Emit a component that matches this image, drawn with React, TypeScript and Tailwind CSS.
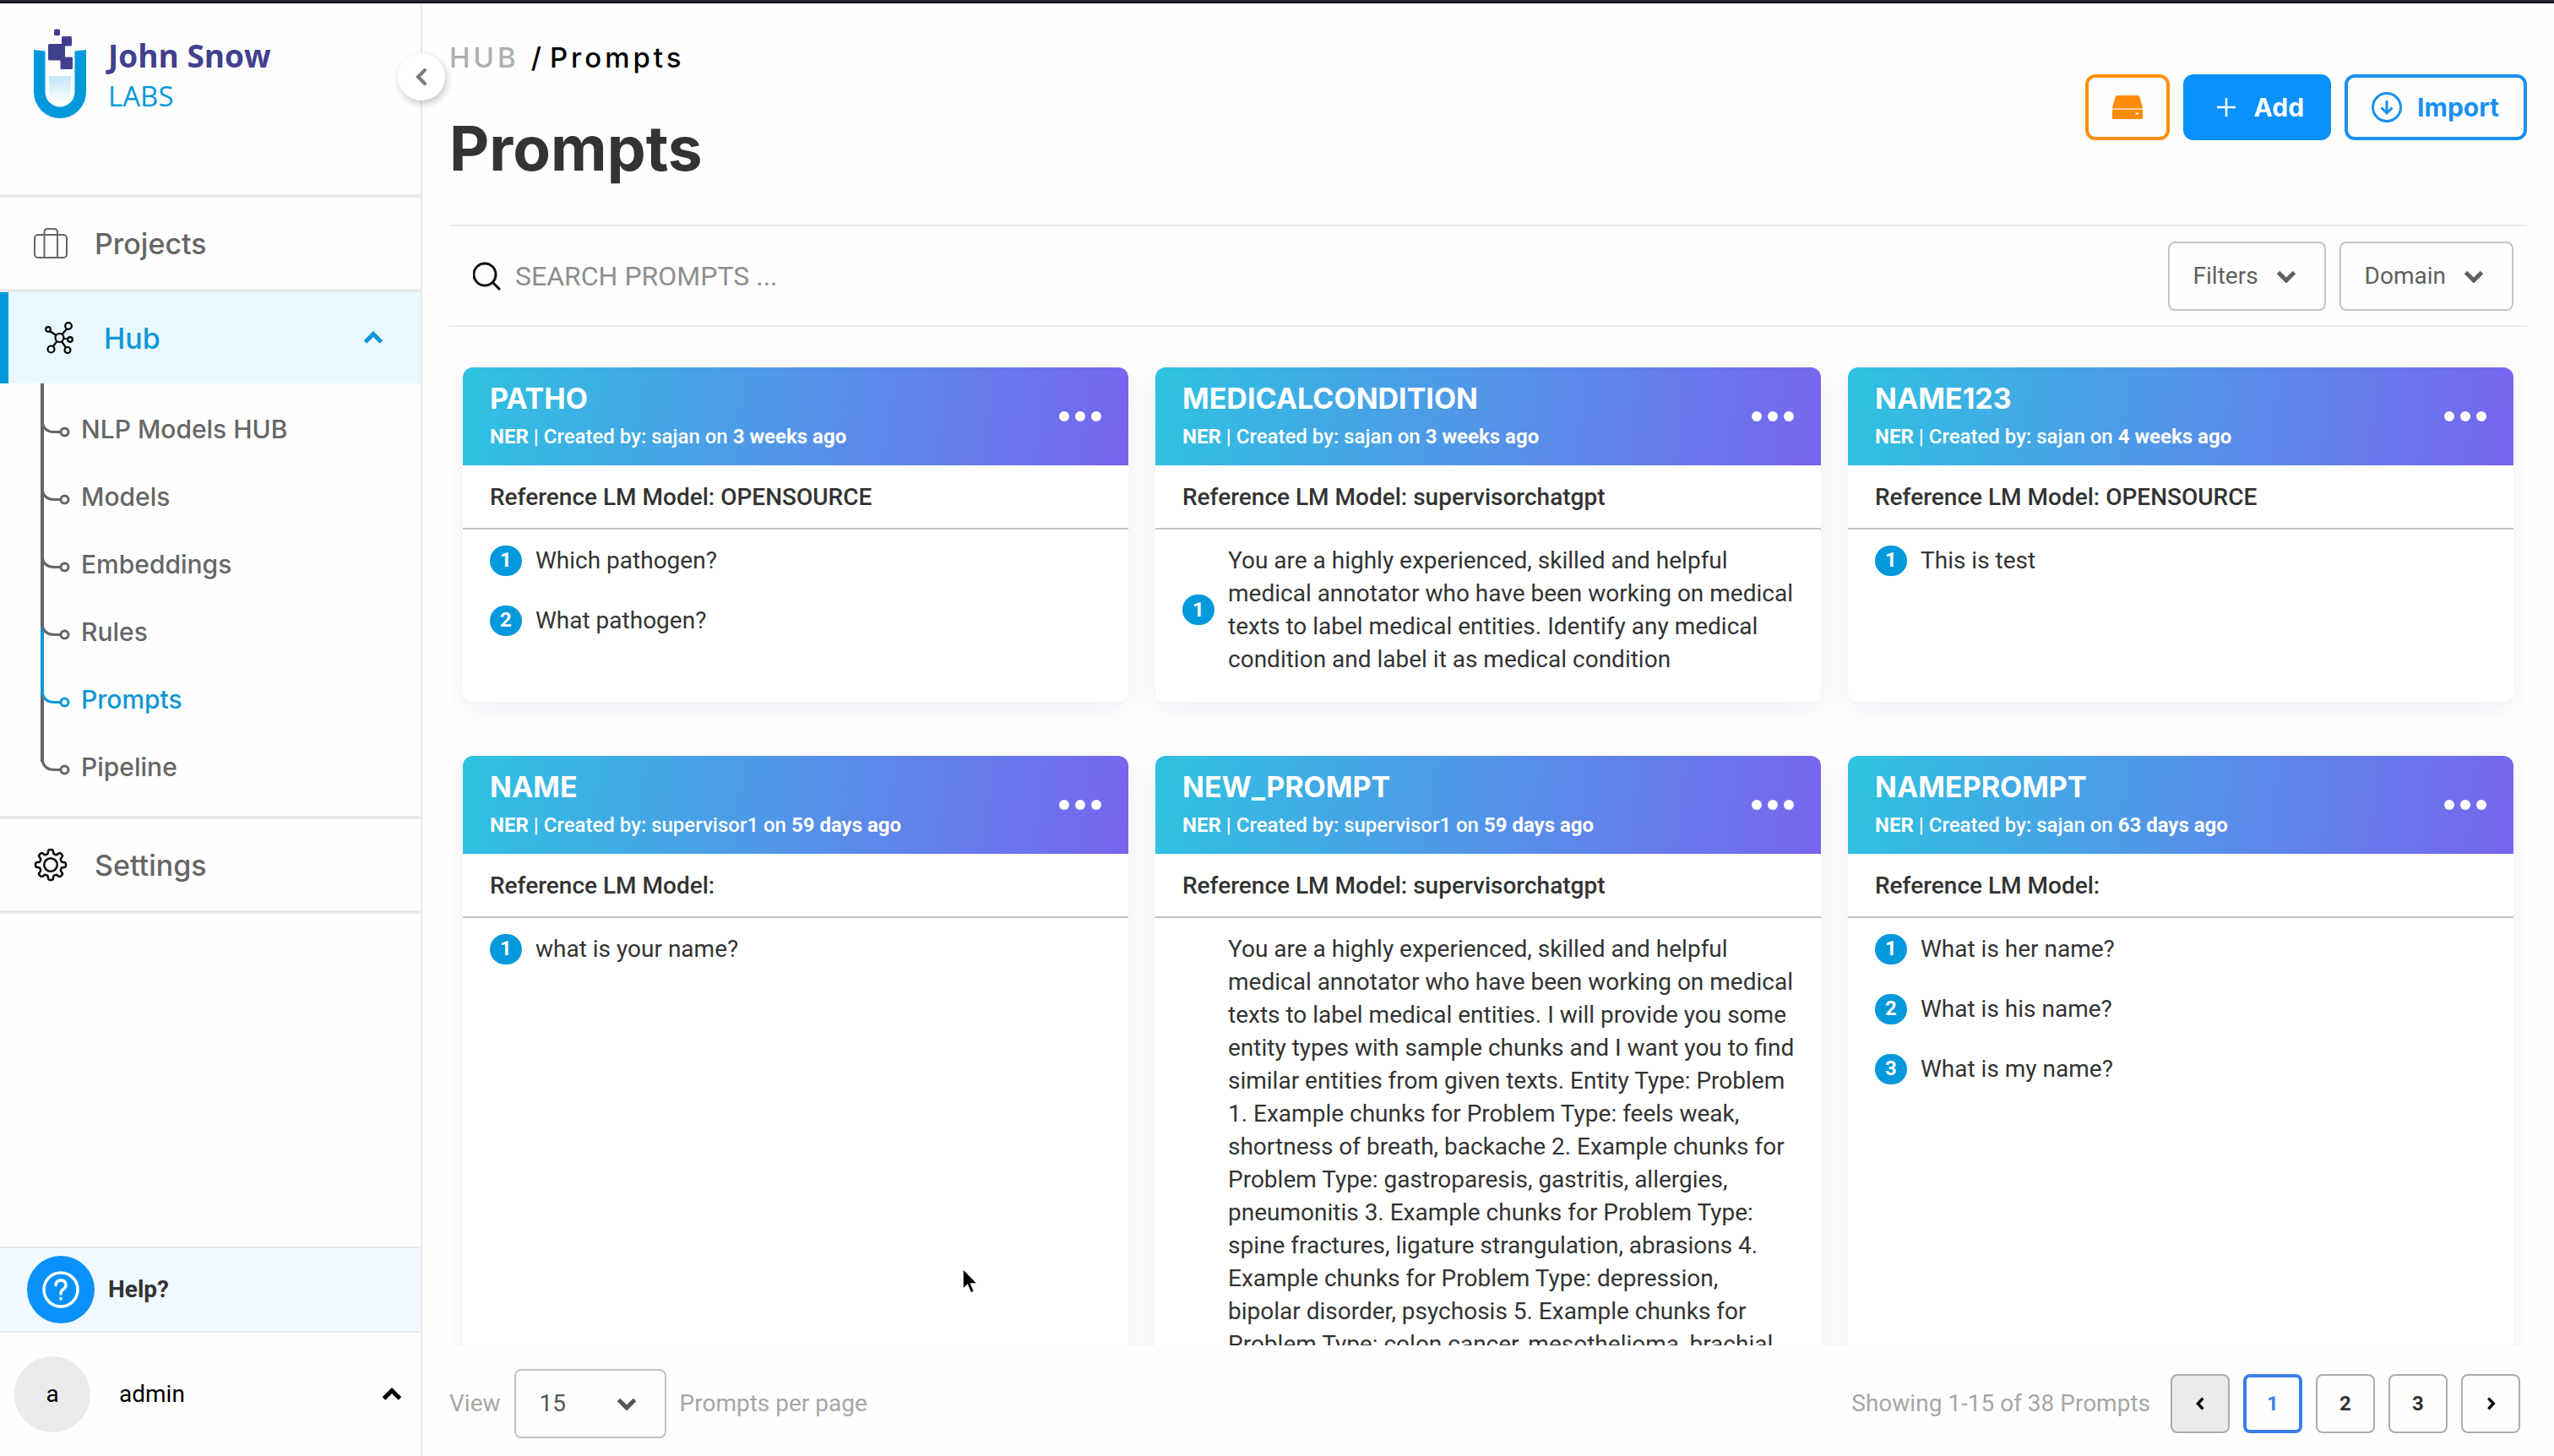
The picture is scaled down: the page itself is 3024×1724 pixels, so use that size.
import React from "react";

const INTER = "font-['Inter',sans-serif]";

type Prompt = {
  name: string;
  author: string;
  age: string;
  model: string;
  items: string[];
};

const prompts: Prompt[] = [
  {
    name: "PATHO",
    author: "sajan",
    age: "3 weeks ago",
    model: "OPENSOURCE",
    items: ["Which pathogen?", "What pathogen?"],
  },
  {
    name: "MEDICALCONDITION",
    author: "sajan",
    age: "3 weeks ago",
    model: "supervisorchatgpt",
    items: [
      "You are a highly experienced, skilled and helpful medical annotator who have been working on medical texts to label medical entities. Identify any medical condition and label it as medical condition",
    ],
  },
  {
    name: "NAME123",
    author: "sajan",
    age: "4 weeks ago",
    model: "OPENSOURCE",
    items: ["This is test"],
  },
  {
    name: "NAME",
    author: "supervisor1",
    age: "59 days ago",
    model: "",
    items: ["what is your name?"],
  },
  {
    name: "NEW_PROMPT",
    author: "supervisor1",
    age: "59 days ago",
    model: "supervisorchatgpt",
    items: [
      "You are a highly experienced, skilled and helpful medical annotator who have been working on medical texts to label medical entities. I will provide you some entity types with sample chunks and I want you to find similar entities from given texts. Entity Type: Problem 1. Example chunks for Problem Type: feels weak, shortness of breath, backache 2. Example chunks for Problem Type: gastroparesis, gastritis, allergies, pneumonitis 3. Example chunks for Problem Type: spine fractures, ligature strangulation, abrasions 4. Example chunks for Problem Type: depression, bipolar disorder, psychosis 5. Example chunks for Problem Type: colon cancer, mesothelioma, brachial plexus injury 6. Example chunks for Problem Type: hypertension, diabetes mellitus, anemia Entity Type: Treatment 1. Example chunks for Treatment Type: surgery, chemotherapy, radiation therapy 2. Example chunks for Treatment Type: aspirin, insulin, antibiotics 3. Example chunks for Treatment Type: physical therapy, dialysis, transfusion Entity Type: Test 1. Example chunks for Test Type: blood pressure, chest x-ray, biopsy 2. Example chunks for Test Type: ultrasound, colonoscopy, echocardiogram 3. Example chunks for Test Type: hemoglobin, platelet count, glucose level 4. Example chunks for Test Type: urine culture, lumbar puncture, stress test 5. Example chunks for Test Type: sodium, potassium, creatinine 6. Example chunks for Test Type: heart rate, oxygen saturation, temperature 7. Example chunks for Test Type: mammogram, bone scan, spirometry",
    ],
  },
  {
    name: "NAMEPROMPT",
    author: "sajan",
    age: "63 days ago",
    model: "",
    items: ["What is her name?", "What is his name?", "What is my name?"],
  },
];

const hubLinks = ["NLP Models HUB", "Models", "Embeddings", "Rules", "Prompts", "Pipeline"];

function Chevron({ dir, className }: { dir: "up" | "down" | "left" | "right"; className: string }) {
  const d = {
    up: "M2.5 13 L12 3.5 L21.5 13",
    down: "M2.5 3.5 L12 13 L21.5 3.5",
    left: "M13 2.5 L4 12 L13 21.5",
    right: "M4 2.5 L13 12 L4 21.5",
  }[dir];
  const box = dir === "up" || dir === "down" ? "0 0 24 16" : "0 0 16 24";
  return (
    <svg viewBox={box} className={className} fill="none" stroke="currentColor" strokeWidth="5" aria-hidden="true">
      <path d={d} />
    </svg>
  );
}

function LogoMark() {
  return (
    <svg viewBox="0 0 64 108" className="h-[108px] w-16 shrink-0" aria-hidden="true">
      <defs>
        <linearGradient id="liquid" x1="0" y1="0" x2="0" y2="1">
          <stop offset="0" stopColor="#c4e6fb" />
          <stop offset="1" stopColor="#ffffff" />
        </linearGradient>
      </defs>
      <path
        d="M0 26 L13.500 27.500 V76 A17.500 17.500 0 0 0 48.500 76 V27.500 L62 26 V76 A31 31 0 0 1 0 76 Z"
        fill="#0298dc"
      />
      <path d="M18 57 H44 V79 Q42 89 31 89 Q20 89 18 79 Z" fill="url(#liquid)" />
      <g fill="#41408f">
        <rect x="24" y="1.500" width="7" height="7.500" rx="1.500" />
        <rect x="33" y="10" width="12" height="11.500" rx="1.500" />
        <rect x="17" y="19" width="20" height="19.500" rx="1.500" />
        <rect x="31.500" y="34.500" width="14.500" height="14.500" rx="1.500" />
      </g>
    </svg>
  );
}

function SuitcaseIcon() {
  return (
    <svg viewBox="0 0 40 36" className="h-9 w-10" fill="none" stroke="#666" strokeWidth="2" aria-hidden="true">
      <rect x="1" y="8" width="38" height="27" rx="4" />
      <path d="M12.500 35 V5 Q12.500 1 16.500 1 H24 Q28 1 28 5 V35" />
    </svg>
  );
}

function HubIcon() {
  return (
    <svg viewBox="0 0 34 38" className="h-[38px] w-[34px]" fill="none" stroke="#000" strokeWidth="2.200" aria-hidden="true">
      <circle cx="17.500" cy="19" r="5" />
      <circle cx="4" cy="9" r="2.800" />
      <circle cx="28" cy="5" r="3.800" />
      <circle cx="30" cy="21" r="2.800" />
      <circle cx="7.500" cy="32.500" r="4" />
      <circle cx="27" cy="33.500" r="3.500" />
      <path d="M6 11 L13.500 16 M26 8.500 L20.500 15 M22.500 20 H27 M14.500 23 L10 29 M20 23.500 L25 30.500" />
    </svg>
  );
}

const gearPath = (() => {
  const pts: string[] = [];
  for (let i = 0; i < 240; i++) {
    const a = (i / 240) * Math.PI * 2;
    const wave = Math.tanh(2.4 * Math.cos(8 * a));
    const r = 15.6 + 2.4 * wave;
    pts.push(`${(20 + r * Math.cos(a)).toFixed(2)} ${(20 + r * Math.sin(a)).toFixed(2)}`);
  }
  return `M${pts.join(" L")} Z`;
})();

function GearIcon() {
  return (
    <svg viewBox="0 0 40 40" className="size-10" fill="none" stroke="#111" strokeWidth="2.600" strokeLinejoin="round" aria-hidden="true">
      <path d={gearPath} />
      <circle cx="20" cy="20" r="7.800" />
    </svg>
  );
}

function Branch({ first, last, active, nextActive }: { first: boolean; last: boolean; active: boolean; nextActive: boolean }) {
  const grey = "#666666";
  const line = active ? "#0f97d6" : grey;
  const top = first ? -14 : 0;
  return (
    <svg viewBox="0 0 34 80" className="h-20 w-[34px] shrink-0 overflow-visible" fill="none" aria-hidden="true">
      {!last && <path d="M2 34 V80" stroke={nextActive ? "#0f97d6" : grey} strokeWidth="4" />}
      <path d={`M2 ${top} V34`} stroke={line} strokeWidth="4" />
      <path d="M2 32 Q4 43.500 16 43.500 H24" stroke={line} strokeWidth="3" />
      <circle cx="28.500" cy="43.500" r="4.500" stroke={line} strokeWidth="3" />
    </svg>
  );
}

function Sidebar() {
  return (
    <aside className="relative flex w-[500px] shrink-0 flex-col border-r-2 border-[#e9e9e9]">
      <div className="flex h-[230px] items-start gap-6 border-b-4 border-[#e9e9e9] pt-[29px] pl-10">
        <LogoMark />
        <div className="flex flex-col pt-2 font-['Open_Sans',sans-serif]">
          <span className="text-[37px] leading-[49px] font-bold text-[#41408f]">John Snow</span>
          <span className="text-[33px] leading-[48px] text-[#0298dc]">LABS</span>
        </div>
      </div>
      <button
        type="button"
        aria-label="Collapse sidebar"
        className="absolute top-[59px] -right-[29px] z-10 flex size-14 items-center justify-center rounded-full bg-white text-[#7a7a7a] shadow-[2px_4px_10px_rgba(0,0,0,0.22)]"
      >
        <svg viewBox="0 0 14 22" className="h-[22px] w-[14px]" fill="none" stroke="currentColor" strokeWidth="4" strokeLinecap="round" aria-hidden="true">
          <path d="M11 3 L3 11 L11 19" />
        </svg>
      </button>
      <nav className={`${INTER} text-[34px] font-medium text-[#666]`}>
        <a href="#projects" className="flex h-28 items-center gap-8 border-b-4 border-[#e9e9e9] pl-10">
          <SuitcaseIcon />
          Projects
        </a>
        <div className="border-b-4 border-[#e9e9e9]">
          <a href="#hub" className="flex h-[108px] items-center border-l-[10px] border-[#0298dc] bg-[#e9f7fe] pr-11 pl-[43px] text-[#0f97d6]">
            <HubIcon />
            <span className="ml-9 grow">Hub</span>
            <Chevron dir="up" className="h-4 w-6" />
          </a>
          <ul className="pt-[14px] pb-[18px] text-[30px]">
            {hubLinks.map((label, i) => (
              <li key={label}>
                <a
                  href={`#${label.toLowerCase().replace(/ /g, "-")}`}
                  className={`flex h-20 items-center gap-[14px] pl-12 ${label === "Prompts" ? "text-[#0f97d6]" : ""}`}
                >
                  <Branch
                    first={i === 0}
                    last={i === hubLinks.length - 1}
                    active={label === "Prompts"}
                    nextActive={hubLinks[i + 1] === "Prompts"}
                  />
                  {label}
                </a>
              </li>
            ))}
          </ul>
        </div>
        <a href="#settings" className="flex h-28 items-center gap-8 border-b-4 border-[#e9e9e9] pl-10">
          <GearIcon />
          Settings
        </a>
      </nav>
      <div className="mt-auto">
        <a href="#help" className="flex h-[102px] items-center gap-4 border-y-2 border-[#e9e9e9] bg-[#f0f9ff] pl-8 text-[28px] font-bold text-[#333]">
          <span className="flex size-20 items-center justify-center rounded-full bg-[#0891fa]">
            <svg viewBox="0 0 44 44" className="size-11" fill="none" stroke="#fff" strokeWidth="3.500" strokeLinecap="round" aria-hidden="true">
              <circle cx="22" cy="22" r="20" />
              <path d="M16 16.500 Q16.500 11 22 11 Q28 11 28 16.500 Q28 19.500 25 21.500 Q22 23.500 22 27" />
              <path d="M22 32.500 V33" />
            </svg>
          </span>
          Help?
        </a>
        <button type="button" className="flex h-[146px] w-full items-center pr-[22px] pl-[17px] text-left text-[28px] text-black">
          <span className="flex size-[90px] items-center justify-center rounded-full bg-[#ebebeb]">a</span>
          <span className="ml-[34px] grow">admin</span>
          <Chevron dir="up" className="h-4 w-6" />
        </button>
      </div>
    </aside>
  );
}

function PageHeader() {
  return (
    <header className={`${INTER} flex items-start justify-between border-b-2 border-[#ebebeb] pb-[50px]`}>
      <div>
        <nav aria-label="Breadcrumb" className="flex pt-11 text-[33px] leading-10 font-medium tracking-[4px] text-black">
          <a href="#hub" className="text-[#adadad]">HUB</a>
          <span className="mr-[6px] ml-[14px]">/</span>
          <span>Prompts</span>
        </nav>
        <h1 className="mt-12 text-[73px] leading-20 font-bold text-[#333]">Prompts</h1>
      </div>
      <div className="mt-[84px] flex h-[78px] gap-4 text-[30px] font-bold">
        <button type="button" aria-label="Storage" className="flex w-[100px] items-center justify-center rounded-xl border-4 border-[#fd8f0c]">
          <svg viewBox="0 0 36 28" className="h-7 w-9" aria-hidden="true">
            <path d="M5 0 H31 L32.500 2 L36 15 H0 L3.500 2 Z M0 17 H36 V26.500 Q36 28 34.500 28 H1.500 Q0 28 0 26.500 Z" fill="#ff8c08" />
            <path d="M0 15 H36 V17 H0 Z" fill="#ffd09a" />
            <path d="M27.500 21.500 H31" stroke="#fff" strokeWidth="2" />
          </svg>
        </button>
        <button type="button" className="flex items-center gap-[22px] rounded-xl bg-[#0891fa] pr-8 pl-10 text-white">
          <svg viewBox="0 0 22 22" className="size-[22px]" stroke="#fff" strokeWidth="2.500" aria-hidden="true">
            <path d="M11 0 V22 M0 11 H22" />
          </svg>
          Add
        </button>
        <button type="button" className="flex items-center gap-[18px] rounded-xl border-4 border-[#1a90f0] pr-[29px] pl-7 text-[#1a90f0]">
          <svg viewBox="0 0 36 36" className="size-9" fill="none" stroke="currentColor" strokeWidth="3" aria-hidden="true">
            <circle cx="18" cy="18" r="16.500" />
            <path d="M18 10 V25 M11.500 18.500 L18 25 L24.500 18.500" />
          </svg>
          Import
        </button>
      </div>
    </header>
  );
}

function DropButton({ label }: { label: string }) {
  return (
    <button type="button" className="flex h-[82px] items-center gap-[21px] rounded-lg border-2 border-[#c4c4c4] pr-[33px] pl-7 text-[28px] text-[#606060]">
      {label}
      <Chevron dir="down" className="h-4 w-6" />
    </button>
  );
}

function PromptCard({ prompt }: { prompt: Prompt }) {
  return (
    <article className="flex flex-col rounded-xl bg-white shadow-[0_8px_32px_rgba(90,90,180,0.10)]">
      <div className="flex h-[116px] items-center justify-between rounded-t-xl bg-linear-[97deg] from-[#2ec2e1] to-[#7865ef] px-8 text-white">
        <div className="pt-2">
          <h2 className={`${INTER} text-[34px] leading-10 font-bold`}>{prompt.name}</h2>
          <p className="text-[24px] leading-[50px] font-medium">
            <b className="font-bold">NER</b> | Created by: {prompt.author} on <b className="font-bold">{prompt.age}</b>
          </p>
        </div>
        <button type="button" aria-label={`Actions for ${prompt.name}`} className="flex gap-[7px]">
          <i className="size-3 rounded-full bg-white" />
          <i className="size-3 rounded-full bg-white" />
          <i className="size-3 rounded-full bg-white" />
        </button>
      </div>
      <p className="flex h-[76px] items-center border-b-2 border-[#c2c2c2] px-8 pt-[2px] text-[28px] font-medium">
        Reference LM Model: {prompt.model}
      </p>
      <ol className="flex flex-col gap-8 pt-[17px] pr-[30px] pb-[31px] pl-8 text-[28px] leading-[39px]">
        {prompt.items.map((item, i) => (
          <li key={item} className="flex items-center gap-4">
            <span className="flex h-9 w-[38px] shrink-0 items-center justify-center rounded-full bg-[#0298dc] text-[24px] font-bold text-white">
              {i + 1}
            </span>
            {item}
          </li>
        ))}
      </ol>
    </article>
  );
}

function Footer() {
  const page = "flex size-[70px] items-center justify-center rounded-lg border-2 border-[#adadad] text-[#333]";
  return (
    <footer className="flex items-center justify-between pt-7 pr-2 pb-[21px] text-[28px] text-[#a6a6a6]">
      <div className="flex items-center gap-4">
        <label htmlFor="page-size">View</label>
        <div className="relative text-[#555]">
          <select id="page-size" defaultValue="15" className="h-[82px] w-[180px] appearance-none rounded-lg border-2 border-[#c2c2c2] pl-7">
            <option>15</option>
            <option>30</option>
            <option>60</option>
          </select>
          <Chevron dir="down" className="pointer-events-none absolute top-[33px] right-[35px] h-4 w-6" />
        </div>
        <span>Prompts per page</span>
      </div>
      <div className="flex items-center gap-4">
        <span className="mr-2">Showing 1-15 of 38 Prompts</span>
        <nav aria-label="Pagination" className="flex gap-4 text-[24px] font-bold">
          <button type="button" aria-label="Previous page" className="flex size-[70px] items-center justify-center rounded-lg border-2 border-[#adadad] bg-[#ebebeb] text-black">
            <Chevron dir="left" className="h-4 w-3" />
          </button>
          <button type="button" className="flex size-[70px] items-center justify-center rounded-lg border-4 border-[#3a7fe8] text-[#3a7fe8]">1</button>
          <button type="button" className={page}>2</button>
          <button type="button" className={page}>3</button>
          <button type="button" aria-label="Next page" className={page}>
            <Chevron dir="right" className="h-4 w-3 text-black" />
          </button>
        </nav>
      </div>
    </footer>
  );
}

export default function App() {
  return (
    <div className="relative flex h-screen flex-col bg-[#fefefe] font-['Roboto',sans-serif] text-[#333]">
      <div className="h-1 shrink-0 border-t-2 border-[#2a2836] bg-[#050509]" />
      <div className="flex min-h-0 grow">
        <Sidebar />
        <main className="flex min-w-0 grow flex-col px-8">
          <PageHeader />
          <div className="flex items-center gap-4 border-b-2 border-[#ebebeb] pt-[18px] pr-4 pb-[17px] pl-7">
            <svg viewBox="0 0 34 34" className="size-[34px]" fill="none" stroke="#111" strokeWidth="3" aria-hidden="true">
              <circle cx="14" cy="15" r="13" />
              <path d="M23.500 24.500 L32 33" />
            </svg>
            <input
              type="text"
              aria-label="Search prompts"
              placeholder="SEARCH PROMPTS ..."
              className="min-w-0 grow text-[32px] outline-none placeholder:text-[#8e8e8e]"
            />
            <DropButton label="Filters" />
            <DropButton label="Domain" />
          </div>
          <section aria-label="Prompts" className="grid min-h-0 grow basis-0 grid-cols-3 content-start gap-x-8 gap-y-16 overflow-hidden px-4 pt-12">
            {prompts.map((p) => (
              <PromptCard key={p.name} prompt={p} />
            ))}
          </section>
          <Footer />
        </main>
      </div>
      <svg viewBox="0 0 22 34" className="pointer-events-none absolute top-[1500px] left-[1138px] h-[34px] w-[22px]" aria-hidden="true">
        <path d="M2 2 V26.500 L7.500 21.500 L11.500 31 L15.500 29.300 L11.700 20 H19.500 Z" fill="#000" stroke="#fff" strokeWidth="1.500" />
      </svg>
    </div>
  );
}
